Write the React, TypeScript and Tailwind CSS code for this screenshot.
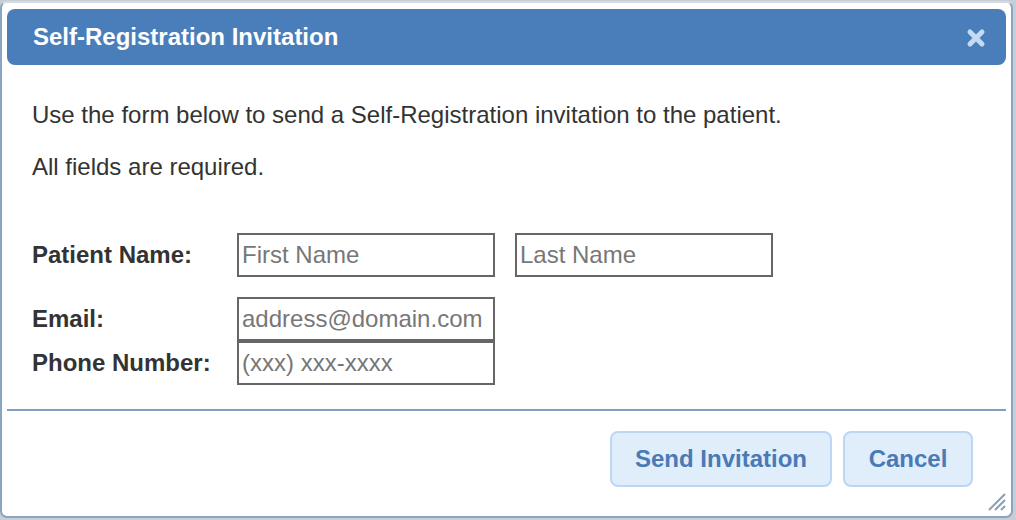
export default function App() {
  const font = { fontFamily: '"Liberation Sans", Arial, Helvetica, sans-serif' }
  return (
    <div className="w-[1016px] h-[520px] bg-[#c7ced6] flex overflow-hidden" style={font}>
      <div className="relative w-[1013px] h-[517px] mt-[1px] bg-white border-2 border-[#8aa5c2] border-t-[#d5dbe2] rounded-[7px] px-[5px] pt-[6px] flex flex-col">
        <div className="h-[56px] shrink-0 bg-[#4a7eba] rounded-[8px] flex items-center justify-between pl-[26px] pr-[20px]">
          <span className="text-white font-bold text-[24px] leading-none">Self-Registration Invitation</span>
          <svg width="20" height="20" viewBox="0 0 20 20" className="mt-[2px]">
            <path d="M4 4 L16 16 M16 4 L4 16" stroke="#c3dbf3" strokeWidth="5" strokeLinecap="round" />
          </svg>
        </div>

        <div className="pl-[25px] text-[#333] text-[24px] leading-[24px]">
          <p className="mt-[38px]">Use the form below to send a Self-Registration invitation to the patient.</p>
          <p className="mt-[28px]">All fields are required.</p>

          <div className="mt-[54px] flex items-center">
            <label className="w-[205px] font-bold">Patient Name:</label>
            <input
              placeholder="First Name"
              className="w-[258px] h-[44px] border-2 border-[#666] px-[3px] text-[24px] placeholder:text-[#777] outline-none"
            />
            <input
              placeholder="Last Name"
              className="ml-[20px] w-[258px] h-[44px] border-2 border-[#666] px-[3px] text-[24px] placeholder:text-[#777] outline-none"
            />
          </div>

          <div className="mt-[20px] flex items-center">
            <label className="w-[205px] font-bold">Email:</label>
            <input
              placeholder="address@domain.com"
              className="w-[258px] h-[44px] border-2 border-[#666] px-[3px] text-[24px] placeholder:text-[#777] outline-none"
            />
          </div>
          <div className="flex items-center">
            <label className="w-[205px] font-bold">Phone Number:</label>
            <input
              placeholder="(xxx) xxx-xxxx"
              className="w-[258px] h-[44px] border-2 border-[#666] px-[3px] text-[24px] placeholder:text-[#777] outline-none"
            />
          </div>
        </div>

        <div className="mt-[24px] h-[2px] bg-[#7f9fc0]" />

        <div className="mt-[20px] flex justify-end gap-[11px] pr-[33px]">
          <button className="w-[222px] h-[56px] bg-[#e0edfb] border-2 border-[#bcd6f3] rounded-[8px] text-[#4a7ab5] font-bold text-[24px]">
            Send Invitation
          </button>
          <button className="w-[130px] h-[56px] bg-[#e0edfb] border-2 border-[#bcd6f3] rounded-[8px] text-[#4a7ab5] font-bold text-[24px]">
            Cancel
          </button>
        </div>

        <svg width="22" height="22" viewBox="0 0 22 22" className="absolute right-[4px] bottom-[4px]">
          <path d="M20 4 L4 20 M20 10 L10 20 M20 16 L16 20" stroke="#8a9fb8" strokeWidth="2" />
        </svg>
      </div>
    </div>
  )
}
